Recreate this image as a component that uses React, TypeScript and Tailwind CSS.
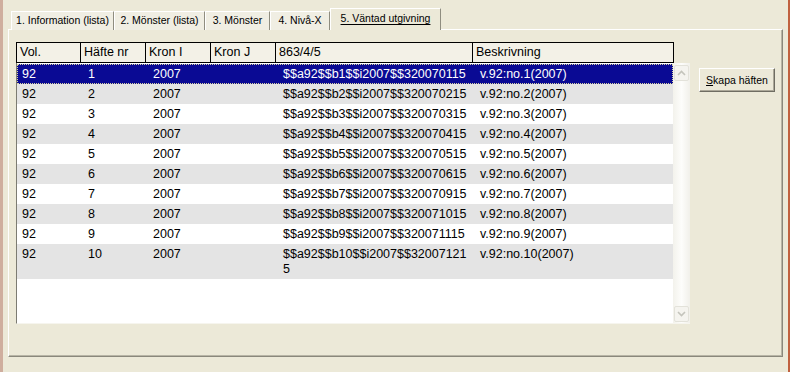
import React from "react";

const data: [string, string][] = [
  ["1", "0115"],
  ["2", "0215"],
  ["3", "0315"],
  ["4", "0415"],
  ["5", "0515"],
  ["6", "0615"],
  ["7", "0915"],
  ["8", "1015"],
  ["9", "1115"],
  ["10", "1215"],
];

const widths = ["w-[64px]", "w-[65px]", "w-[65px]", "w-[65px]", "w-[197px]", "w-[200px]"];

function Chevron({ up }: { up?: boolean }) {
  return (
    <svg width="9" height="6" viewBox="0 0 9 6">
      <path
        d={up ? "M1 5 L4.5 1.5 L8 5" : "M1 1 L4.5 4.5 L8 1"}
        fill="none"
        stroke="#c4c4bc"
        strokeWidth="1.6"
      />
    </svg>
  );
}

export default function App() {
  return (
    <div className="w-[790px] h-[372px] bg-[#ECE9D8] border-l-[3px] border-l-[#cfae9e] border-r-[2px] border-r-[#c0613f] pl-[5px] pt-[8px] font-['Liberation_Sans',Arial,sans-serif] text-black overflow-hidden">
      {/* Tabs */}
      <div className="flex items-end h-[22px] pl-[3px] text-[10.5px]">
        {[
          ["1. Information (lista)", "w-[103px]"],
          ["2. Mönster (lista)", "w-[91px]"],
          ["3. Mönster", "w-[65px]"],
          ["4. Nivå-X", "w-[60px]"],
        ].map(([t, w]) => (
          <div
            key={t}
            className={`${w} h-[19px] flex items-center justify-center border-t border-l border-t-white border-l-white border-r border-r-[#8f8d80] bg-[#F0EEE3] leading-none pb-[1px]`}
          >
            {t}
          </div>
        ))}
        <div className="relative z-10 w-[111px] h-[22px] flex items-center justify-center border-t border-l border-t-white border-l-white border-r border-r-[#8f8d80] bg-[#ECE9D8] leading-none pb-[2px]">
          <span className="underline underline-offset-2">5. Väntad utgivning</span>
        </div>
      </div>

      {/* Panel */}
      <div className="-mt-px w-[775px] h-[328px] border border-t-white border-l-white border-r-[#8a887c] border-b-[#8a887c] shadow-[inset_-1px_-1px_0_#b8b5a6] bg-[#ECE9D8] pt-[12px] pl-[7px] flex items-start">
        {/* List */}
        <div className="w-[674px] h-[282px] flex flex-col">
          {/* Header */}
          <div className="flex w-[658px] h-[21px] border border-black bg-[#F3F1E7] text-[12.5px] leading-[19px]">
            {["Vol.", "Häfte nr", "Kron I", "Kron J", "863/4/5", "Beskrivning"].map((h, i) => (
              <div
                key={h}
                className={`${widths[i]} ${i < 5 ? "border-r border-black" : ""} pl-[3px] whitespace-nowrap`}
              >
                {h}
              </div>
            ))}
          </div>
          {/* Body */}
          <div className="flex h-[261px] border-l border-l-[#7c7b72] border-b border-b-[#f6f5ee] bg-white">
            <div className="w-[656px] pt-[1px] text-[12.5px] leading-[15px]">
              {data.map(([n, code], idx) => {
                const selected = idx === 0;
                const bg = selected
                  ? "bg-[#0A0A94] text-white outline-1 outline-dotted -outline-offset-1 outline-[#d8d3a0]"
                  : idx % 2 === 1
                  ? "bg-[#E4E4E4]"
                  : "bg-white";
                const last = n === "10";
                return (
                  <div key={n} className={`flex pt-[3px] pb-[2px] ${bg}`}>
                    <div className="w-[64px] pl-[5px]">92</div>
                    <div className="w-[65px] pl-[7px]">{n}</div>
                    <div className="w-[65px] pl-[7px]">2007</div>
                    <div className="w-[65px] pl-[7px]"></div>
                    <div className="w-[197px] pl-[7px] whitespace-nowrap">
                      {last ? (
                        <>
                          $$a92$$b10$$i2007$$32007121
                          <br />5
                        </>
                      ) : (
                        `$$a92$$b${n}$$i2007$$32007${code}`
                      )}
                    </div>
                    <div className="w-[200px] pl-[7px] whitespace-nowrap">v.92:no.{n}(2007)</div>
                  </div>
                );
              })}
            </div>
            {/* Scrollbar */}
            <div className="w-[17px] h-full bg-[linear-gradient(to_right,#f3f2ec,#fdfdfb_50%,#f1f0ea)] flex flex-col justify-between pt-[2px] pb-[1px] pl-[1px]">
              <div className="w-[15px] h-[16px] rounded-[2px] border border-[#e3e2da] bg-[#f5f4ef] flex items-center justify-center">
                <Chevron up />
              </div>
              <div className="w-[15px] h-[16px] rounded-[2px] border border-[#e3e2da] bg-[#f5f4ef] flex items-center justify-center">
                <Chevron />
              </div>
            </div>
          </div>
        </div>

        {/* Button */}
        <div className="ml-[9px] mt-[26px] w-[76px] h-[24px] border border-t-white border-l-white border-r-[#6f6d62] border-b-[#6f6d62] shadow-[inset_-1px_-1px_0_#aca899] bg-[#ECE9D8] flex items-center justify-center text-[10.5px] leading-none">
          <span>
            <span className="underline">S</span>kapa häften
          </span>
        </div>
      </div>
    </div>
  );
}
